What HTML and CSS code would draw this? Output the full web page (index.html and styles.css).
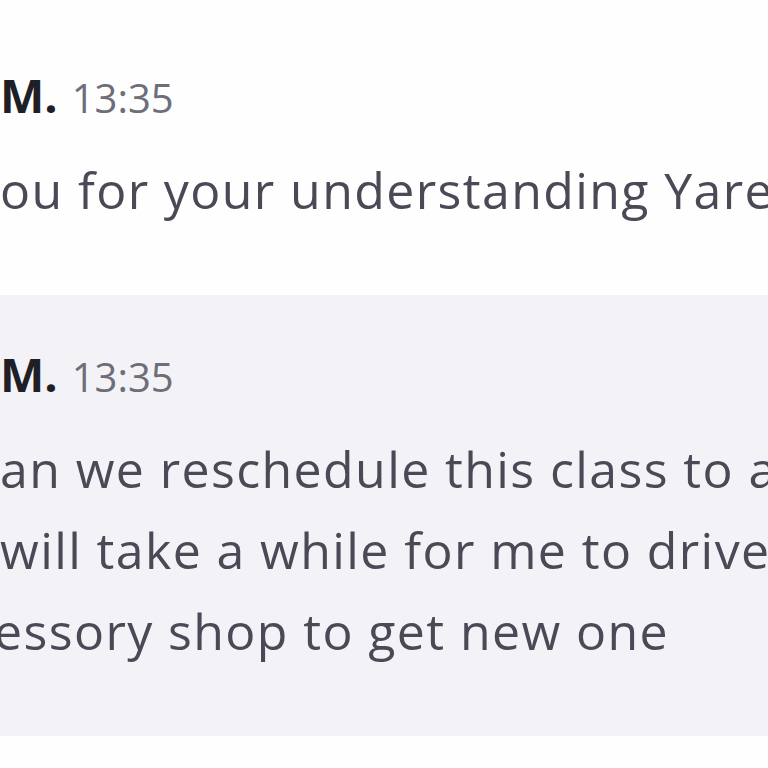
FILE: index.html
```html
<!DOCTYPE html>
<html lang="en">
<head>
<meta charset="utf-8">
<title>Chat</title>
<link rel="stylesheet" href="styles.css">
</head>
<body>
<main class="thread">
  <article class="msg">
    <header class="msg-head"><span class="name">M.</span><time class="time">13:35</time></header>
    <p class="msg-body"><span class="line">ou for your understanding Yared</span></p>
  </article>
  <article class="msg msg-hover">
    <header class="msg-head"><span class="name">M.</span><time class="time">13:35</time></header>
    <p class="msg-body">
      <span class="line">an we reschedule this class to another day</span>
      <span class="line">will take a while for me to drive to the</span>
      <span class="line cut">essory shop to get new one</span>
    </p>
  </article>
</main>
</body>
</html>
```

FILE: styles.css
```css
html, body {
  margin: 0;
  padding: 0;
  background: #fefefe;
  overflow: hidden;
  width: 768px;
  height: 768px;
}
body {
  font-family: "Open Sans", "Noto Sans", sans-serif;
  color: #4a4a56;
}
.thread {
  display: flex;
  flex-direction: column;
  padding-top: 16px;
}
.msg {
  padding: 39px 0 64px 0;
  white-space: nowrap;
}
.msg-hover {
  background: #f3f3f7;
}
.msg-head {
  display: flex;
  align-items: baseline;
  gap: 14px;
  line-height: 81px;
  height: 81px;
}
.name {
  font-size: 47px;
  font-weight: 700;
  color: #1f1f28;
}
.time {
  font-size: 40px;
  color: #6e6e78;
}
.msg-body {
  margin: 14px 0 0 0;
  font-size: 50px;
  line-height: 81px;
  letter-spacing: 1.4px;
}
.line {
  display: block;
}
.cut {
  text-indent: -6px;
}
```
